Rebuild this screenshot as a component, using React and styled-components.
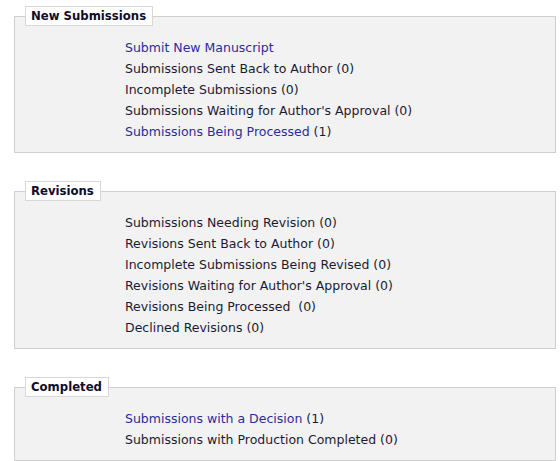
import React from "react";
import styled, { createGlobalStyle } from "styled-components";

const Global = createGlobalStyle`
  html, body { margin: 0; padding: 0; background: #ffffff; }
  body { font-family: "DejaVu Sans", Verdana, sans-serif; font-size: 12.5px; color: #1a1a33; }
`;

const Page = styled.div`
  display: flex;
  flex-direction: column;
  gap: 28px;
  padding: 6px 4px 0 14px;
  width: 542px;
`;

const Box = styled.fieldset`
  margin: 0;
  padding: 0 10px 10px 10px;
  border: 1px solid #cfcfcf;
  background: #f2f2f2;
  min-width: 0;
`;

const Legend = styled.legend`
  padding: 0 6px 0 5px;
  height: 18px;
  line-height: 19px;
  border: 1px solid #d8d8d8;
  background: #ffffff;
  font-weight: bold;
  color: #0d0d2b;
  font-size: 11.7px;
`;

const List = styled.ul`
  list-style: none;
  margin: 11px 0 0 100px;
  padding: 0;
`;

const Item = styled.li`
  height: 21px;
  line-height: 21px;
  white-space: nowrap;
  color: #1a1a33;
`;

const Link = styled.a`
  color: #2b2b9e;
  text-decoration: none;
  cursor: pointer;
`;

const sections = [
  {
    title: "New Submissions",
    items: [
      { link: "Submit New Manuscript" },
      { text: "Submissions Sent Back to Author (0)" },
      { text: "Incomplete Submissions (0)" },
      { text: "Submissions Waiting for Author's Approval (0)" },
      { link: "Submissions Being Processed", text: " (1)" },
    ],
  },
  {
    title: "Revisions",
    items: [
      { text: "Submissions Needing Revision (0)" },
      { text: "Revisions Sent Back to Author (0)" },
      { text: "Incomplete Submissions Being Revised (0)" },
      { text: "Revisions Waiting for Author's Approval (0)" },
      { text: "Revisions Being Processed\u00a0 (0)" },
      { text: "Declined Revisions (0)" },
    ],
  },
  {
    title: "Completed",
    items: [
      { link: "Submissions with a Decision", text: " (1)" },
      { text: "Submissions with Production Completed (0)" },
    ],
  },
];

export default function App() {
  return (
    <>
      <Global />
      <Page>
        {sections.map((s) => (
          <Box key={s.title}>
            <Legend>{s.title}</Legend>
            <List>
              {s.items.map((it, i) => (
                <Item key={i}>
                  {it.link && <Link>{it.link}</Link>}
                  {it.text}
                </Item>
              ))}
            </List>
          </Box>
        ))}
      </Page>
    </>
  );
}
